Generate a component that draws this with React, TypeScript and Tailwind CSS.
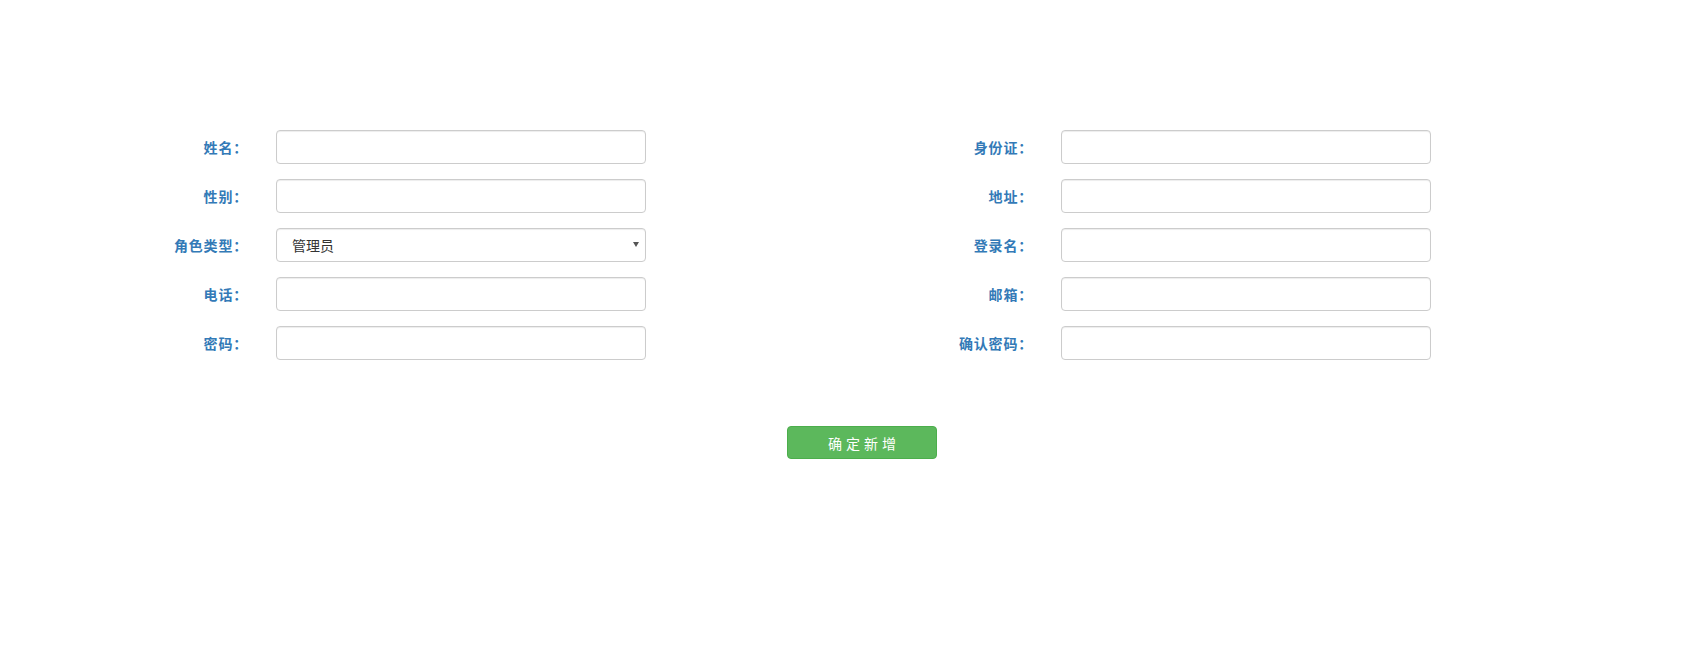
import React from "react";

const font = { fontFamily: '"Noto Sans CJK SC", "Noto Sans", sans-serif' };

function Field({ label, select }: { label: string; select?: boolean }) {
  return (
    <div className="flex items-center h-[34px] mb-[15px]">
      <label className="w-[248px] text-right text-[14px] font-bold text-[#337ab7] leading-[20px] tracking-[0.8px] whitespace-nowrap">
        {label}
      </label>
      <div className="ml-[28px] w-[370px] h-[34px] relative">
        {select ? (
          <>
            <select
              defaultValue="管理员"
              className="appearance-none w-full h-full border border-[#ccc] rounded-[4px] bg-white pl-[15px] pr-6 text-[14px] text-[#333] shadow-[inset_0_1px_1px_rgba(0,0,0,0.075)] outline-none"
              style={font}
            >
              <option>管理员</option>
              <option>普通用户</option>
            </select>
            <svg
              className="absolute right-[7px] top-[14px] pointer-events-none"
              width="6"
              height="5"
              viewBox="0 0 6 5"
            >
              <polygon points="0,0 6,0 3,5" fill="#555" />
            </svg>
          </>
        ) : (
          <input
            type="text"
            className="w-full h-full border border-[#ccc] rounded-[4px] bg-white px-3 text-[14px] text-[#555] shadow-[inset_0_1px_1px_rgba(0,0,0,0.075)] outline-none"
            style={font}
          />
        )}
      </div>
    </div>
  );
}

export default function App() {
  return (
    <div className="w-[1703px] h-[671px] bg-white overflow-hidden" style={font}>
      <div className="pt-[130px] flex">
        <div className="w-[785px]">
          <Field label="姓名：" />
          <Field label="性别：" />
          <Field label="角色类型：" select />
          <Field label="电话：" />
          <Field label="密码：" />
        </div>
        <div className="w-[785px]">
          <Field label="身份证：" />
          <Field label="地址：" />
          <Field label="登录名：" />
          <Field label="邮箱：" />
          <Field label="确认密码：" />
        </div>
      </div>
      <div className="mt-[51px] pl-[787px]">
        <button className="w-[150px] h-[33px] bg-[#5cb85c] border border-[#4cae4c] rounded-[4px] text-white text-[14px] tracking-[4px] pl-[4px] leading-[20px]">
          确定新增
        </button>
      </div>
    </div>
  );
}
